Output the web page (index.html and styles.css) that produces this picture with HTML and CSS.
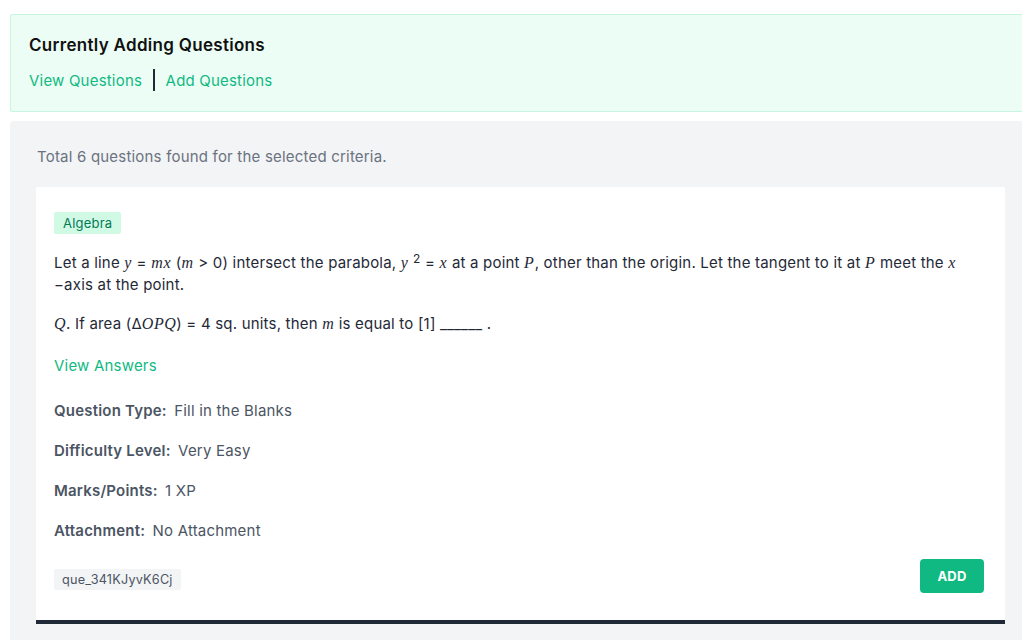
FILE: index.html
```html
<!DOCTYPE html>
<html>
<head>
<meta charset="utf-8">
<link rel="stylesheet" href="styles.css">
</head>
<body>
<div class="page">
  <section class="adding">
    <h2 class="adding-title">Currently Adding Questions</h2>
    <nav class="adding-links">
      <a class="link">View Questions</a>
      <span class="sep"></span>
      <a class="link">Add Questions</a>
    </nav>
  </section>
  <section class="results">
    <p class="count">Total 6 questions found for the selected criteria.</p>
    <article class="card">
      <span class="tag">Algebra</span>
      <p class="qtext">Let a line <span class="m">y</span> = <span class="m">mx</span> (<span class="m">m</span> &gt; 0) intersect the parabola, <span class="m">y</span> <sup>2</sup> = <span class="m">x</span> at a point <span class="m">P</span>, other than the origin. Let the tangent to it at <span class="m">P</span> meet the <span class="m">x</span> −axis at the point.</p>
      <p class="qtext q2"><span class="m">Q</span>. If area (Δ<span class="m">OPQ</span>) = 4 sq. units, then <span class="m">m</span> is equal to [1] ______ .</p>
      <a class="link answers">View Answers</a>
      <div class="meta">
        <div class="meta-row"><b>Question Type:</b> Fill in the Blanks</div>
        <div class="meta-row"><b>Difficulty Level:</b> Very Easy</div>
        <div class="meta-row"><b>Marks/Points:</b> 1 XP</div>
        <div class="meta-row"><b>Attachment:</b> No Attachment</div>
      </div>
      <div class="card-foot">
        <span class="qid">que_341KJyvK6Cj</span>
        <button class="add">ADD</button>
      </div>
    </article>
  </section>
</div>
</body>
</html>
```
FILE: styles.css
```css
html, body { margin: 0; padding: 0; overflow: hidden; background: #fff; }
body { font-family: Inter, "Noto Sans", sans-serif; color: #1f2937; letter-spacing: 0.2px; }
.page { padding: 14px 0 0 10px; width: 1021px; }
.adding {
  background: #ecfdf5;
  border: 1px solid #c6f6df;
  border-radius: 2px;
  padding: 19px 18px 19px 18px;
  height: 58px;
}
.adding-title { margin: 0; font-size: 17px; font-weight: 600; color: #111; line-height: 22px; letter-spacing: 0.3px; }
.adding-links { display: flex; align-items: center; margin-top: 13px; height: 22px; }
.link { color: #10b981; font-size: 15px; text-decoration: none; }
.sep { width: 1.5px; height: 22px; background: #1f2937; margin: 0 11px 0 11px; }
.results {
  margin-top: 9px;
  background: #f3f4f6;
  border-radius: 4px;
  padding: 25px 26px 0 26px;
  height: 600px;
}
.count { margin: 0 0 19px 1px; font-size: 15px; color: #6b7280; line-height: 22px; }
.card {
  background: #fff;
  padding: 25px 18px 27px 18px;
  border-bottom: 4px solid #1f2937;
  display: flex; flex-direction: column; align-items: flex-start;
}
.tag { background: #d1fae5; color: #047857; font-size: 13px; padding: 3px 9px; border-radius: 2px; line-height: 16px; }
.qtext { margin: 18px 0 0 0; font-size: 15px; line-height: 22px; color: #1f2937; }
.q2 { margin-top: 17px; }
.m { font-family: "Liberation Serif", "DejaVu Serif", serif; font-style: italic; font-size: 16px; letter-spacing: 0.8px; }
.q2 .m { letter-spacing: 0.5px; }
sup { font-size: 12px; line-height: 0; vertical-align: 5px; }
.answers { margin-top: 20px; font-size: 15px; line-height: 22px; }
.meta { margin-top: 23px; display: flex; flex-direction: column; gap: 18px; }
.meta-row { font-size: 15px; color: #4b5563; line-height: 22px; }
.meta-row b { font-weight: 600; margin-right: 3px; }
.card-foot { margin-top: 17px; align-self: stretch; display: flex; justify-content: space-between; align-items: center; }
.qid { background: #f3f4f6; color: #4b5563; font-size: 12.7px; padding: 2px 8px; border-radius: 2px; line-height: 17px; margin-top: 6px; }
.add { background: #10b981; color: #fff; border: none; border-radius: 4px; font-family: Inter, sans-serif; font-weight: 700; font-size: 13px; letter-spacing: 0.2px; width: 64px; height: 34px; margin-right: 3px; }
```
